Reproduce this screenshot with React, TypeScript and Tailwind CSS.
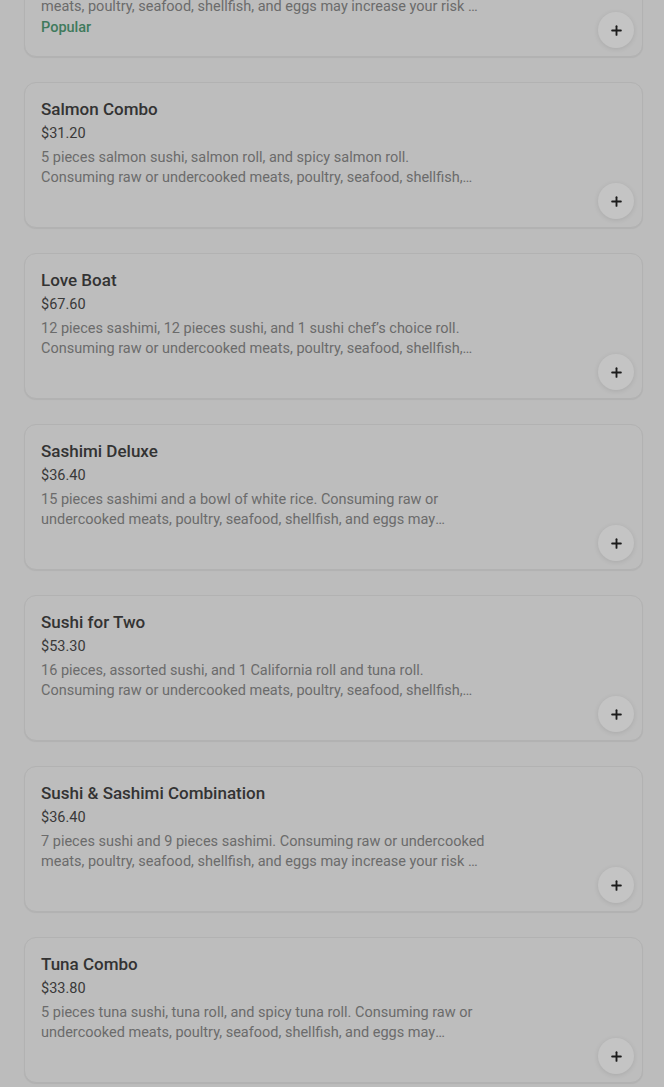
import { Plus } from 'lucide-react';

interface MenuItem {
  name: string;
  price: string;
  description: string;
  popular?: boolean;
}

const disclaimer =
  'Consuming raw or undercooked meats, poultry, seafood, shellfish, and eggs may increase your risk of foodborne illness.';

const items: MenuItem[] = [
  {
    name: 'Chef Special',
    price: '$42.90',
    description: `8 pieces sushi and 8 pieces sashimi. ${disclaimer}`,
    popular: true,
  },
  {
    name: 'Salmon Combo',
    price: '$31.20',
    description: `5 pieces salmon sushi, salmon roll, and spicy salmon roll. ${disclaimer}`,
  },
  {
    name: 'Love Boat',
    price: '$67.60',
    description: `12 pieces sashimi, 12 pieces sushi, and 1 sushi chef’s choice roll. ${disclaimer}`,
  },
  {
    name: 'Sashimi Deluxe',
    price: '$36.40',
    description: `15 pieces sashimi and a bowl of white rice. ${disclaimer}`,
  },
  {
    name: 'Sushi for Two',
    price: '$53.30',
    description: `16 pieces, assorted sushi, and 1 California roll and tuna roll. ${disclaimer}`,
  },
  {
    name: 'Sushi & Sashimi Combination',
    price: '$36.40',
    description: `7 pieces sushi and 9 pieces sashimi. ${disclaimer}`,
  },
  {
    name: 'Tuna Combo',
    price: '$33.80',
    description: `5 pieces tuna sushi, tuna roll, and spicy tuna roll. ${disclaimer}`,
  },
];

function MenuCard({ item }: { item: MenuItem }) {
  return (
    <div className="flex h-[146px] rounded-xl border border-[#b2b2b2] bg-[#bdbdbd] pl-4 pt-[15px] pr-[8px] pb-[8px] shadow-[0_1px_1px_rgba(0,0,0,0.06)]">
      <div className="flex w-[444px] flex-col">
        <h3 className="text-[17px] leading-[22px] font-medium text-[#333333]">
          {item.name}
        </h3>
        <p className="mt-1 text-[14.5px] leading-5 text-[#393939]">
          {item.price}
        </p>
        <p className="mt-1 line-clamp-2 text-[14.5px] leading-5 text-[#6b6b6b]">
          {item.description}
        </p>
        {item.popular && (
          <span className="mt-[1px] text-[14.5px] leading-5 font-medium text-[#3f7a5c]">
            Popular
          </span>
        )}
      </div>
      <div className="flex flex-1 items-end justify-end">
        <button className="flex h-9 w-9 items-center justify-center rounded-full bg-[#c4c4c4] shadow-[0_1px_5px_rgba(0,0,0,0.1)]">
          <Plus className="h-[15px] w-[15px] text-[#1c1c1c]" strokeWidth={3} />
        </button>
      </div>
    </div>
  );
}

export default function App() {
  return (
    <div
      className="h-[1087px] overflow-hidden bg-[#bcbcbc]"
      style={{ fontFamily: 'Roboto, "Noto Sans", sans-serif' }}
    >
      <div className="mt-[-89px] ml-6 mr-[21px] flex flex-col gap-[25px]">
        {items.map((item) => (
          <MenuCard key={item.name} item={item} />
        ))}
      </div>
    </div>
  );
}
